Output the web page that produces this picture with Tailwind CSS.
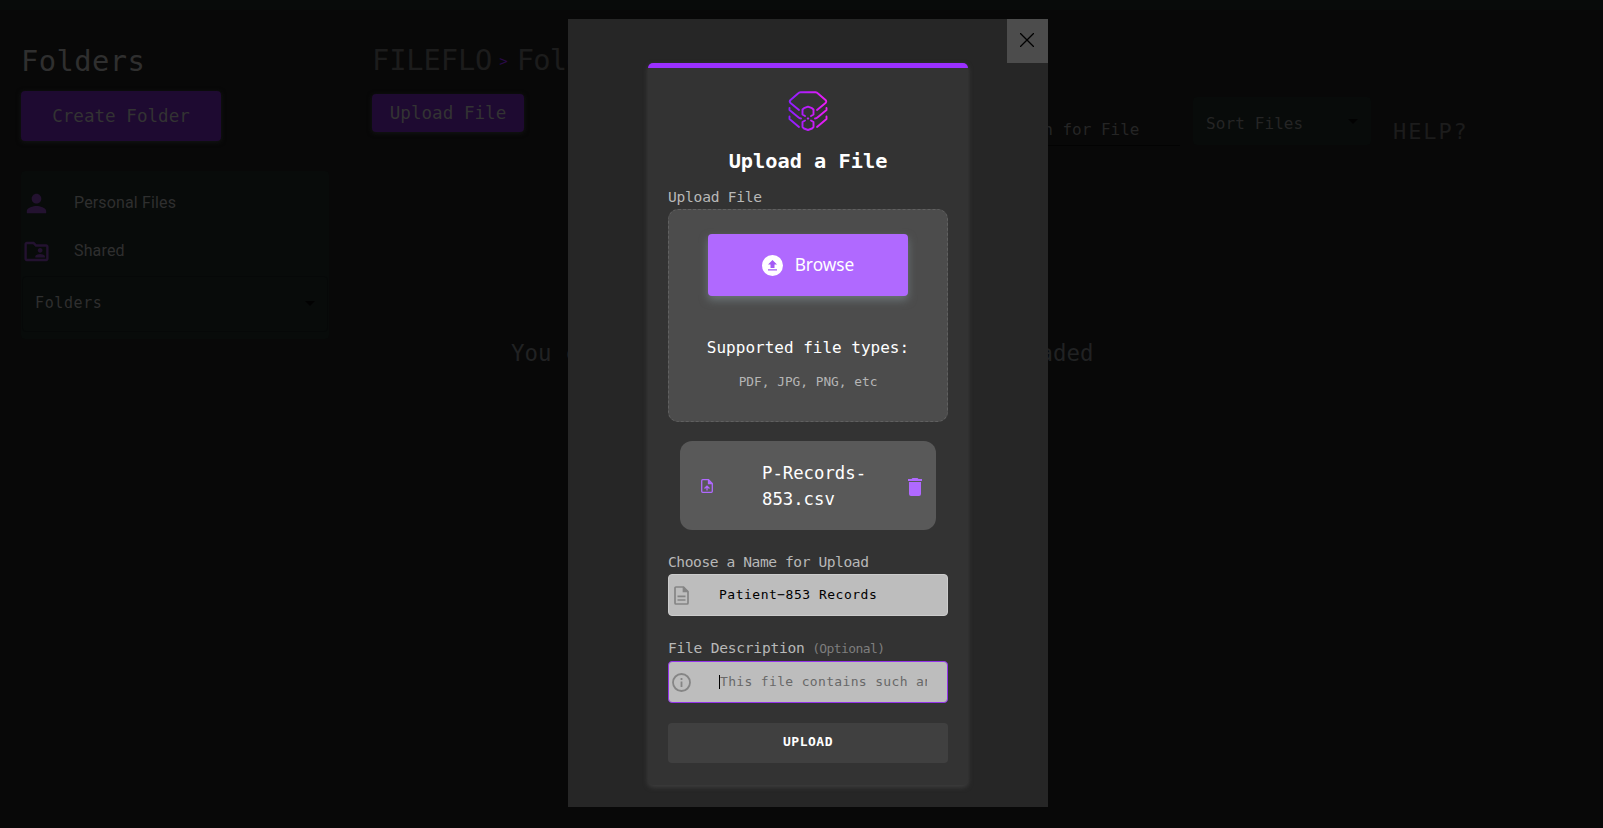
<!DOCTYPE html>
<html lang="en">
<head>
<meta charset="utf-8">
<title>Fileflo</title>
<script src="https://cdn.jsdelivr.net/npm/@tailwindcss/browser@4"></script>
</head>
<body class="h-[828px] overflow-hidden bg-[#080808] font-['DejaVu_Sans_Mono','Liberation_Mono',monospace] text-[#2b2b2b]">
<header class="h-[10px] bg-[#080b0a]"></header>
<div class="flex h-[818px] pl-[21px]">
  <aside class="w-[307px] shrink-0 pt-[31px]">
    <h1 class="h-10 text-[28.8px] leading-10 tracking-[0.4px] text-[#2f2f2f]">Folders</h1>
    <button class="mt-[10px] block h-[50px] w-[200px] rounded bg-[#1e0a31] text-[17.6px] text-[#333] shadow-[0_1px_5px_#141616]">Create Folder</button>
    <nav class="mt-[30px] h-[168px] w-[308px] rounded bg-[#080b0a] pt-2 font-['Roboto',sans-serif] text-base tracking-[0.15px] text-[#2f2f2f]">
      <a class="flex h-12 items-center"><svg class="ml-[1px] size-[29px]" viewBox="0 0 24 24" fill="#231230"><path d="M12 12c2.21 0 4-1.79 4-4s-1.79-4-4-4-4 1.79-4 4 1.79 4 4 4zm0 2c-2.67 0-8 1.34-8 4v2h16v-2c0-2.66-5.33-4-8-4z"/></svg><span class="ml-[23px]">Personal Files</span></a>
      <a class="flex h-12 items-center"><svg class="ml-[1px] size-[29px]" viewBox="0 0 24 24" fill="#231230"><path d="M20 6h-8l-2-2H4c-1.100 0-1.990.9-1.990 2L2 18c0 1.100.9 2 2 2h16c1.100 0 2-.9 2-2V8c0-1.100-.9-2-2-2zm0 12H4V6h5.170l2 2H20v10zm-5-5c1.100 0 2-.9 2-2s-.9-2-2-2-2 .9-2 2 .9 2 2 2zm-4 4h8v-1c0-1.330-2.670-2-4-2s-4 .67-4 2v1z"/></svg><span class="ml-[23px]">Shared</span></a>
      <div class="mx-px mt-px flex h-[56px] items-center justify-between rounded border border-[#060808] pb-px pl-3 pr-3 font-['DejaVu_Sans_Mono',monospace] text-[15px] tracking-[0.6px]"><span>Folders</span><svg class="h-[5px] w-[10px]" viewBox="0 0 10 5"><path d="M0 0h10L5 5z" fill="#020202"/></svg></div>
    </nav>
  </aside>
  <main class="ml-11 w-[1231px] pt-[31px]">
    <div class="flex h-[53px] items-start whitespace-nowrap text-[28.8px] leading-[38px] text-[#1c1c1c]"><span class="tracking-[-0.15px]">FILEFLO</span><span class="ml-[7px] text-[14px] leading-10 text-[#2a0a49]">&gt;</span><span class="ml-[9px] tracking-[-0.8px]">Folders</span></div>
    <div class="flex h-[58px] items-start text-base">
      <button class="h-[38px] w-[152px] rounded bg-[#1e0a31] text-[17.6px] text-[#333] shadow-[0_1px_5px_#141616]">Upload File</button>
      <div class="ml-[471px] mt-[16px] h-[36px] w-[185px] border-b border-[#030303] pt-2 leading-6 text-[#252525]">Search for File</div>
      <div class="ml-[13px] mt-[3px] flex h-[48px] w-[178px] items-center justify-between rounded bg-[#080b0a] pl-[13px] pr-[13px] tracking-[0.1px] text-[#252525]"><span class="pt-[5px]">Sort Files</span><svg class="h-[5px] w-[10px]" viewBox="0 0 10 5"><path d="M0 0h10L5 5z" fill="#020202"/></svg></div>
      <div class="ml-[22px] mt-[22px] text-[22px] leading-8 tracking-[1.9px] text-[#1c1c1c]">HELP?</div>
    </div>
    <p class="ml-[139px] mt-[185px] whitespace-nowrap text-[22.4px] leading-8 tracking-[0.07px] text-[#212223]">You currently don't have any files uploaded</p>
  </main>
</div>

<div role="dialog" class="absolute left-[568px] top-[19px] h-[788px] w-[480px] bg-[#262626] px-20 pt-[44px]">
  <button class="absolute right-0 top-0 flex h-[44px] w-[41px] items-center justify-center bg-[#4c4c4c]"><svg class="mb-[3px] mr-px size-[14px]" viewBox="0 0 14 14" stroke="#000" stroke-width="1.3"><path d="M0 0L14 14M14 0L0 14"/></svg></button>
  <form class="flex h-[722px] flex-col rounded-[5px] border-t-[5px] border-[#9b30ff] bg-[#333] px-5 shadow-[0_2px_5px_#404040]">
    <svg class="mt-[22px] h-[42px] w-[42px] self-center" viewBox="0 0 42 42" fill="none" stroke="url(#g)" stroke-width="1.9" stroke-linecap="round" stroke-linejoin="round">
      <defs><linearGradient id="g" gradientUnits="userSpaceOnUse" x1="2" y1="0" x2="40" y2="0"><stop stop-color="#8c1eff"/><stop offset="1" stop-color="#ed1cf5"/></linearGradient></defs>
      <path d="M12 20L3.500 13Q2 11.500 3.500 10L11 3.500Q12 2.200 13.500 2.200H28.500Q30 2.200 31 3.500L38.500 10Q40 11.500 38.500 13L30 20"/>
      <path d="M2.500 18V20L11 27Q12.500 28.500 14 28.500M2.500 26.500V29L12 37M39.500 18V20L31 27Q29.500 28.500 28 28.500M39.500 26.500V29L30 37"/>
      <path d="M18 26L15.500 24.500V19.500L17 18.200L21 16.700L25 18.200L26.500 19.500V24.500L24 26M18 30.500L15.500 32V37L17 38.500L21 40L25 38.500L26.500 37V32L24 30.500M20.700 28.500H21.300"/>
    </svg>
    <h2 class="mt-[13px] h-[32px] text-center text-[20.3px] font-bold leading-8 text-white">Upload a File</h2>
    <label class="mt-[8px] h-[24px] whitespace-nowrap text-[14.6px] leading-[23px] tracking-[-0.25px] text-[#b8b8b8]">Upload File</label>
    <div class="flex h-[213px] shrink-0 flex-col items-center rounded-[10px] border border-dashed border-[#606060] bg-[#4c4c4c] pt-6">
      <button type="button" class="flex h-[62px] w-[200px] items-center justify-center rounded bg-[#b069ff] font-['Noto_Sans',sans-serif] text-[17.3px] text-white shadow-[0_4px_8px_#6c7578]">
        <svg class="mr-3 size-[21px]" viewBox="0 0 21 21"><circle cx="10.500" cy="10.500" r="10.500" fill="#fff"/><path d="M10.500 5L15 9.400H12.500V13H8.500V9.400H6zM6 14.300H15V15.500H6z" fill="#a35af5"/></svg>Browse
      </button>
      <p class="mt-10 text-base leading-6 text-white">Supported file types:</p>
      <p class="mt-[12px] text-[12.8px] leading-5 text-[#b5b5b5]">PDF, JPG, PNG, etc</p>
    </div>
    <div class="mx-3 mt-[19px] flex h-[89px] shrink-0 items-center rounded-xl bg-[#595959] text-[#b069ff]">
      <svg class="ml-[21px] mt-px h-[14px] w-3" viewBox="0 0 12 14" fill="none" stroke="currentColor" stroke-width="1.300"><path d="M7.500.7H1.700Q.7.700.7 1.700V12.300Q.7 13.300 1.700 13.300H10.300Q11.300 13.300 11.300 12.300V4.500zM6 11.500V7.500M3.500 9.500L6 7.200L8.500 9.500"/><path d="M7.500 1V4.500H11" fill="currentColor"/></svg>
      <p class="ml-[49px] w-[120px] text-[17.3px] leading-[26px] text-white">P-Records-853.csv</p>
      <svg class="ml-[26px] mt-[3px] h-[18px] w-[14px]" viewBox="0 0 14 18" fill="currentColor"><path d="M0 1H3.500L4.500 0H9.500L10.500 1H14V3H0zM1 4H13V16Q13 18 11 18H3Q1 18 1 16z"/></svg>
    </div>
    <label class="mt-[20px] h-[24px] whitespace-nowrap text-[14.6px] leading-[23px] tracking-[-0.43px] text-[#b8b8b8]">Choose a Name for Upload</label>
    <div class="flex h-[42px] shrink-0 items-center rounded border border-[#ccc] bg-[#bdbdbd]">
      <svg class="ml-[5px] mt-px h-[19px] w-[15px]" viewBox="0 0 15 19" fill="none" stroke="#858585" stroke-width="1.700"><path d="M9.500 1H2Q1 1 1 2V17Q1 18 2 18H13Q14 18 14 17V5.500zM3.500 10.300H11.500M3.500 14H11.500"/><path d="M9.500 1V5.500H14" fill="#858585"/></svg>
      <span class="ml-[30px] text-[13px] tracking-[0.5px] text-black">Patient−853 Records</span>
    </div>
    <label class="mt-[20px] h-[25px] whitespace-nowrap text-[14.6px] leading-6 tracking-[-0.25px] text-[#b8b8b8]">File Description <span class="ml-[-1px] text-[13px] tracking-[-0.6px] text-[#7e7e7e]">(Optional)</span></label>
    <div class="flex h-[42px] shrink-0 items-center rounded border border-[#9333ea] bg-[#bdbdbd]">
      <svg class="ml-[3px] size-[19px]" viewBox="0 0 19 19" fill="none" stroke="#858585" stroke-width="1.800"><circle cx="9.500" cy="9.500" r="8.500"/><path d="M9.500 8.500V14M9.500 5V7"/></svg>
      <span class="ml-[28px] h-[14px] w-px shrink-0 bg-black"></span>
      <span class="w-[207px] overflow-hidden whitespace-nowrap pb-px text-[13px] tracking-[0.34px] text-[#686868]">This file contains such and such</span>
    </div>
    <button type="button" class="mt-5 h-[40px] shrink-0 rounded bg-[#404040] pb-[3px] text-[13px] font-bold tracking-[0.5px] text-white">UPLOAD</button>
  </form>
</div>
</body>
</html>
